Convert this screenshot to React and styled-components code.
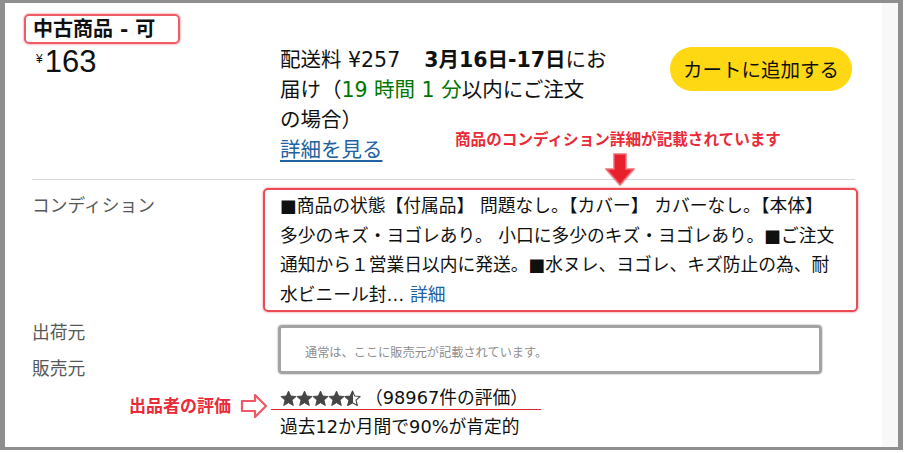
import React from "react";
import styled, { createGlobalStyle } from "styled-components";

const Global = createGlobalStyle`
  html, body { margin: 0; padding: 0; background: #fff; }
  body {
    font-family: "DejaVu Sans", "Noto Sans CJK JP", sans-serif;
    color: #0f1111;
  }
`;

const RED = "#e92b38";

const Frame = styled.div`
  width: 903px;
  height: 450px;
  box-sizing: border-box;
  border-style: solid;
  border-color: #8f8f8f;
  border-width: 3px 5px 3px 5px;
  background: linear-gradient(to right, #fff 877px, #f8f8f8 877px);
  padding: 11px 0 0 27px;
  overflow: hidden;
`;

const Title = styled.div`
  width: fit-content;
  margin-left: -8px;
  padding: 0 23px 0 7px;
  height: 26px;
  line-height: 26px;
  border: 2px solid rgba(236, 64, 78, 0.85);
  box-shadow: 0 0 1.5px 1px rgba(236, 64, 78, 0.3);
  border-radius: 5px;
  font-size: 20px;
  font-weight: 700;
  color: #0f1111;
`;

const TopRow = styled.div`
  display: flex;
  align-items: flex-start;
  margin-top: 1px;
`;

const PriceCol = styled.div`
  width: 248px;
  flex: none;
  display: flex;
  align-items: flex-start;
  padding-top: 2px;
  font-family: "Liberation Sans", Arial, sans-serif;
  color: #0f1111;
`;

const Currency = styled.span`
  font-size: 12px;
  line-height: 12px;
  margin: 6px 2px 0 4px;
`;

const Amount = styled.span`
  font-size: 31px;
  line-height: 30px;
`;

const Delivery = styled.div`
  width: 335px;
  flex: none;
  font-size: 20.5px;
  line-height: 30px;
`;

const Strong = styled.b`
  font-weight: 700;
  margin-left: 24px;
`;

const Green = styled.span`
  color: #007600;
`;

const Link = styled.a`
  color: #2162a1;
  text-decoration: ${(p) => (p.$underline ? "underline" : "none")};
  text-decoration-thickness: 1.5px;
  text-underline-offset: 3px;
  cursor: pointer;
  display: ${(p) => (p.$block ? "block" : "inline")};
`;

const CartButton = styled.button`
  margin: 2px 0 0 55px;
  height: 44px;
  padding: 0 13px;
  border: none;
  border-radius: 22px;
  background: #ffd814;
  color: #0f1111;
  font-family: "Noto Sans CJK JP", sans-serif;
  font-size: 19.5px;
  line-height: 44px;
  white-space: nowrap;
`;

const Divider = styled.div`
  margin-top: 14px;
  width: 823px;
  height: 1px;
  background: #d5d9d9;
`;

const Details = styled.div`
  display: grid;
  grid-template-columns: 231px 1fr;
  padding-top: 8px;
  font-size: 17.75px;
`;

const Label = styled.div`
  color: #565959;
  line-height: ${(p) => p.$lh || "29.5px"};
  padding-top: ${(p) => p.$pt || "0px"};
`;

const ConditionBox = styled.div`
  position: relative;
  width: 595px;
  box-sizing: border-box;
  border: 2px solid rgba(233, 43, 56, 0.85);
  box-shadow: 0 0 1.5px 1px rgba(233, 43, 56, 0.25);
  border-radius: 5px;
  padding: 2px 2px 0 15px;
  line-height: 29.5px;
  color: #0f1111;
`;

const Callout = styled.div`
  position: absolute;
  left: 190px;
  top: -60px;
  font-size: 15.6px;
  line-height: 20px;
  font-weight: 700;
  color: ${RED};
  white-space: nowrap;
`;

const DownArrow = styled.svg`
  position: absolute;
  left: 340px;
  top: -37px;
`;

const SellerLabels = styled.div`
  padding-top: 3px;
`;

const SellerValue = styled.div`
  padding: 13px 0 0 15px;
`;

const Placeholder = styled.div`
  width: 544px;
  height: 49px;
  box-sizing: border-box;
  border: 3px solid #a3a3a3;
  box-shadow: 0 0 1px 1px rgba(150, 150, 150, 0.3);
  border-radius: 4px;
  display: flex;
  align-items: center;
  padding: 4px 0 0 24px;
  font-family: "Noto Sans CJK JP", sans-serif;
  font-size: 12.2px;
  color: #8e8e8e;
`;

const Annotation = styled.div`
  display: flex;
  justify-content: flex-end;
  align-items: center;
  gap: 9px;
  padding-top: 6px;
  margin-right: -5px;
  line-height: 24px;
  font-size: 17px;
  font-weight: 700;
  color: ${RED};
`;

const RatingCell = styled.div`
  padding-left: 8px;
`;

const RatingLine = styled.div`
  display: inline-flex;
  align-items: center;
  height: 22px;
  padding: 0 13px 0 9px;
  border-bottom: 1.5px solid #dc2530;
`;

const StarSvg = styled.svg`
  flex: none;
  display: block;
`;

const RatingText = styled.span`
  margin-left: 4px;
  line-height: 22px;
  color: #0f1111;
`;

const Summary = styled.div`
  grid-column: 2;
  margin-top: -3px;
  padding-left: 17px;
  line-height: 22px;
  color: #0f1111;
`;

const STAR =
  "8,0.6 10.2,5.5 15.6,6 11.5,9.6 12.8,15 8,12.2 3.2,15 4.5,9.6 0.4,6 5.8,5.5";

function Stars() {
  return (
    <StarSvg width="81" height="17" viewBox="0 0 81 17">
      <defs>
        <linearGradient id="half" x1="0" x2="1" y1="0" y2="0">
          <stop offset="50%" stopColor="#454545" />
          <stop offset="50%" stopColor="#ffffff" />
        </linearGradient>
      </defs>
      {[0, 1, 2, 3].map((i) => (
        <polygon
          key={i}
          points={STAR}
          transform={`translate(${i * 16 + 0.5} 0.5)`}
          fill="#454545"
          stroke="#454545"
          strokeWidth="0.9"
          strokeLinejoin="round"
        />
      ))}
      <polygon
        points={STAR}
        transform="translate(64.5 0.5)"
        fill="url(#half)"
        stroke="#454545"
        strokeWidth="1.1"
        strokeLinejoin="round"
      />
    </StarSvg>
  );
}

export default function App() {
  return (
    <>
      <Global />
      <Frame>
        <Title>中古商品 - 可</Title>
        <TopRow>
          <PriceCol>
            <Currency>¥</Currency>
            <Amount>163</Amount>
          </PriceCol>
          <Delivery>
            配送料 ¥257<Strong>3月16日-17日</Strong>にお
            <br />
            届け（<Green>19 時間 1 分</Green>以内にご注文
            <br />
            の場合）
            <Link $block $underline>詳細を見る</Link>
          </Delivery>
          <CartButton>カートに追加する</CartButton>
        </TopRow>
        <Divider />
        <Details>
          <Label $pt="4px">コンディション</Label>
          <ConditionBox>
            <Callout>商品のコンディション詳細が記載されています</Callout>
            <DownArrow width="30" height="34" viewBox="0 0 30 34">
              <path
                d="M9 1 H21 V16 H29 L15 32 L1 16 H9 Z"
                fill="#e8202b"
                stroke="rgba(240,110,120,0.75)"
                strokeWidth="2"
                strokeLinejoin="round"
              />
            </DownArrow>
            ■商品の状態【付属品】 問題なし。【カバー】 カバーなし。【本体】
            <br />
            多少のキズ・ヨゴレあり。 小口に多少のキズ・ヨゴレあり。■ご注文
            <br />
            通知から１営業日以内に発送。■水ヌレ、ヨゴレ、キズ防止の為、耐
            <br />
            水ビニール封… <Link>詳細</Link>
          </ConditionBox>

          <SellerLabels>
            <Label $lh="36px">出荷元</Label>
            <Label $lh="36px">販売元</Label>
          </SellerLabels>
          <SellerValue>
            <Placeholder>通常は、ここに販売元が記載されています。</Placeholder>
          </SellerValue>

          <Annotation>
            出品者の評価
            <svg width="28" height="26" viewBox="0 0 28 26">
              <path
                d="M2 8 H15 V2 L26 13 L15 24 V18 H2 Z"
                fill="#fff"
                stroke="#ef5864"
                strokeWidth="2.2"
                strokeLinejoin="round"
              />
            </svg>
          </Annotation>
          <RatingCell>
            <RatingLine>
              <Stars />
              <RatingText>（98967件の評価）</RatingText>
            </RatingLine>
          </RatingCell>

          <Summary>過去12か月間で90%が肯定的</Summary>
        </Details>
      </Frame>
    </>
  );
}
